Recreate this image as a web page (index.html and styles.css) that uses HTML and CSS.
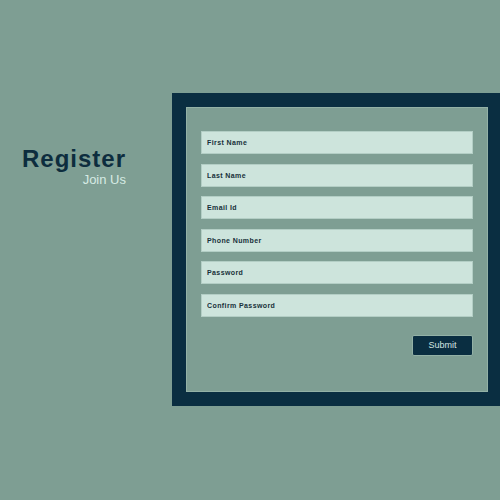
FILE: index.html
```html
<!DOCTYPE html>
<html>
<head>
<meta charset="utf-8">
<link rel="stylesheet" href="styles.css">
</head>
<body>
<div class="page">
  <div class="intro">
    <h1 class="title">Register</h1>
    <p class="subtitle">Join Us</p>
  </div>
  <form class="form-box">
    <div class="fields">
      <input class="field" type="text" placeholder="First Name">
      <input class="field" type="text" placeholder="Last Name">
      <input class="field" type="text" placeholder="Email Id">
      <input class="field" type="text" placeholder="Phone Number">
      <input class="field" type="password" placeholder="Password">
      <input class="field" type="password" placeholder="Confirm Password">
    </div>
    <div class="actions">
      <button class="submit" type="button">Submit</button>
    </div>
  </form>
</div>
</body>
</html>
```
FILE: styles.css
```css
html, body {
  margin: 0;
  padding: 0;
}
body {
  background: #7e9e93;
  width: 500px;
  height: 500px;
  overflow: hidden;
  font-family: "Liberation Sans", Arial, sans-serif;
}
.page {
  display: flex;
  align-items: flex-start;
  padding-top: 93px;
}
.intro {
  width: 126px;
  flex-shrink: 0;
  text-align: right;
  margin-top: 53px;
}
.title {
  margin: 0;
  font-size: 24px;
  line-height: 26px;
  font-weight: bold;
  letter-spacing: 1px;
  color: #0d2d3e;
}
.subtitle {
  margin: 0;
  font-size: 13px;
  line-height: 15px;
  color: #d6ebe4;
}
.form-box {
  margin: 0 0 0 46px;
  flex-shrink: 0;
  width: 302px;
  height: 285px;
  border: 14px solid #0a2e41;
  box-sizing: content-box;
  background: #7e9e93;
  box-shadow: inset 0 0 0 1px #93b1a6;
  padding: 0;
  display: flex;
  flex-direction: column;
}
.fields {
  display: flex;
  flex-direction: column;
  gap: 9.5px;
  padding: 24px 15px 0 15px;
}
.field {
  display: block;
  box-sizing: border-box;
  width: 272px;
  height: 23px;
  margin: 0;
  padding: 0 0 0 5px;
  border: 1px solid #b3cec5;
  background: #cde4dc;
  font-family: "Liberation Sans", Arial, sans-serif;
  font-size: 7px;
  font-weight: bold;
  letter-spacing: 0.4px;
  color: #17303a;
  outline: none;
}
.field::placeholder {
  color: #17303a;
  opacity: 1;
}
.actions {
  display: flex;
  justify-content: flex-end;
  padding: 18px 15px 0 15px;
}
.submit {
  width: 61px;
  height: 21px;
  margin: 0;
  padding: 0;
  border: 1px solid #93b1a6;
  border-radius: 2px;
  background: #0a2e41;
  color: #d3e6e1;
  font-family: "Liberation Sans", Arial, sans-serif;
  font-size: 9px;
  cursor: pointer;
}
```
